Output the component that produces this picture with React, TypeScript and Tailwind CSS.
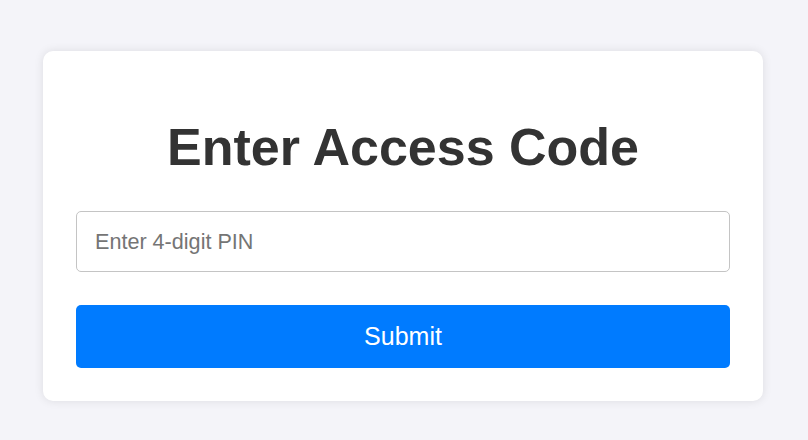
import React, { useState } from "react";

export default function App() {
  const [pin, setPin] = useState("");

  const handleSubmit = (e: React.FormEvent) => {
    e.preventDefault();
  };

  return (
    <div className="min-h-[440px] w-full bg-[#f4f4f9] pt-[51px] font-['Liberation_Sans',Arial,sans-serif]">
      <div className="ml-[43px] w-[720px] rounded-[10px] bg-white px-[33px] pt-[32px] pb-[33px] shadow-[0_0_10px_rgba(0,0,0,0.1)]">
        <h1 className="my-[34px] text-center text-[52px] leading-[60px] font-bold text-[#333]">
          Enter Access Code
        </h1>
        <form onSubmit={handleSubmit}>
          <input
            type="password"
            value={pin}
            onChange={(e) => setPin(e.target.value)}
            placeholder="Enter 4-digit PIN"
            maxLength={4}
            className="block h-[61px] w-[654px] rounded-[5px] border border-[#c4c4c4] px-[18px] text-[21.6px] text-[#333] placeholder:text-[#757575] focus:outline-none"
          />
          <button
            type="submit"
            className="mt-[33px] block h-[63px] w-[654px] rounded-[5px] bg-[#007bff] text-[25px] text-white"
          >
            Submit
          </button>
        </form>
      </div>
    </div>
  );
}
